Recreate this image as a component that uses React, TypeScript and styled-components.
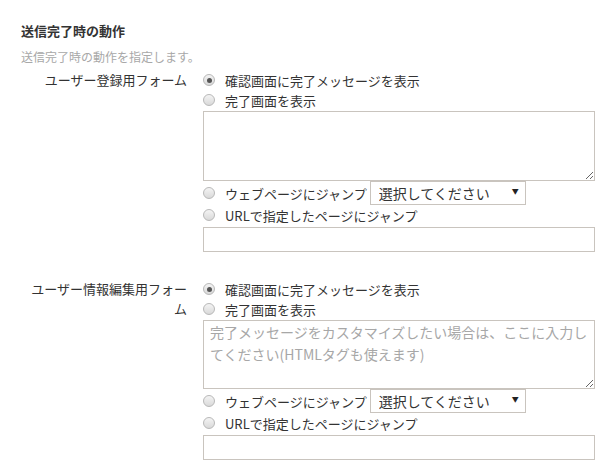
import React from "react";
import styled, { createGlobalStyle } from "styled-components";

const Global = createGlobalStyle`
  html, body { margin: 0; padding: 0; background: #fff; }
  body { font-family: "Noto Sans CJK JP", "Liberation Sans", sans-serif; color: #333; }
`;

const Page = styled.div`
  padding: 21px 8px 0 21px;
  width: 603px;
  box-sizing: border-box;
`;

const Title = styled.h3`
  margin: 0;
  font-size: 13px;
  line-height: 20px;
  font-weight: bold;
  color: #333;
`;

const Desc = styled.p`
  margin: 7px 0 4px;
  font-size: 12px;
  line-height: 18px;
  color: #a8a8a8;
`;

const FormGrid = styled.div`
  display: grid;
  grid-template-columns: 182px 392px;
  row-gap: 27px;
`;

const Label = styled.div`
  text-align: right;
  padding-right: 16px;
  font-size: 13px;
  line-height: 20px;
  color: #333;
`;

const Controls = styled.div`
  display: flex;
  flex-direction: column;
`;

const OptionRow = styled.label`
  display: flex;
  align-items: center;
  height: 20px;
  font-size: 13px;
  color: #333;
  white-space: nowrap;
`;

const Radio = styled.input.attrs({ type: "radio" })`
  appearance: none;
  margin: 0 10px 0 0;
  width: 12px;
  height: 12px;
  border-radius: 50%;
  border: 1px solid #b8b8b8;
  background: linear-gradient(#f4f4f4, #d9d9d9);
  box-sizing: border-box;
  position: relative;
  flex: none;
  &:checked::after {
    content: "";
    position: absolute;
    left: 2.5px;
    top: 2.5px;
    width: 5px;
    height: 5px;
    border-radius: 50%;
    background: #555;
  }
`;

const TextArea = styled.textarea<{ $h: number }>`
  display: block;
  margin: 1px 0 0;
  width: 392px;
  height: ${(p) => p.$h}px;
  box-sizing: border-box;
  border: 1px solid #c9c4be;
  padding: 0 6px;
  font-family: "Noto Sans CJK JP", "Liberation Sans", sans-serif;
  font-size: 14px;
  line-height: 22px;
  color: #333;
  resize: both;
  outline: none;
  &::placeholder { color: #a7a7a7; }
`;

const SelectWrap = styled.span`
  position: relative;
  display: inline-block;
  margin-left: 3px;
`;

const Select = styled.select`
  appearance: none;
  width: 156px;
  height: 24px;
  box-sizing: border-box;
  border: 1px solid #c9c4be;
  border-radius: 0;
  background: #fff;
  padding: 0 0 0 8px;
  font-family: "Noto Sans CJK JP", "Liberation Sans", sans-serif;
  font-size: 14px;
  color: #333;
  outline: none;
`;

const Arrow = styled.span`
  position: absolute;
  right: 7px;
  top: 6px;
  font-size: 7px;
  line-height: 8px;
  color: #222;
  pointer-events: none;
`;

const SelectRow = styled(OptionRow)`
  height: 24px;
`;

const TextInput = styled.input`
  display: block;
  margin: 2px 0 0;
  width: 392px;
  height: 25px;
  box-sizing: border-box;
  border: 1px solid #c9c4be;
  outline: none;
`;

type SectionProps = { name: string; label: string; placeholder?: string; h: number };

const Section = ({ name, label, placeholder, h }: SectionProps) => (
  <>
    <Label>{label}</Label>
    <Controls>
      <OptionRow>
        <Radio name={name} defaultChecked />
        確認画面に完了メッセージを表示
      </OptionRow>
      <OptionRow>
        <Radio name={name} />
        完了画面を表示
      </OptionRow>
      <TextArea $h={h} placeholder={placeholder} />
      <SelectRow>
        <Radio name={name} />
        ウェブページにジャンプ
        <SelectWrap>
          <Select defaultValue="">
            <option value="">選択してください</option>
          </Select>
          <Arrow>▼</Arrow>
        </SelectWrap>
      </SelectRow>
      <OptionRow>
        <Radio name={name} />
        URLで指定したページにジャンプ
      </OptionRow>
      <TextInput type="text" />
    </Controls>
  </>
);

export default function App() {
  return (
    <Page>
      <Global />
      <Title>送信完了時の動作</Title>
      <Desc>送信完了時の動作を指定します。</Desc>
      <FormGrid>
        <Section name="reg" label="ユーザー登録用フォーム" h={70} />
        <Section
          name="edit"
          label="ユーザー情報編集用フォーム"
          h={69}
          placeholder="完了メッセージをカスタマイズしたい場合は、ここに入力してください(HTMLタグも使えます)"
        />
      </FormGrid>
    </Page>
  );
}
